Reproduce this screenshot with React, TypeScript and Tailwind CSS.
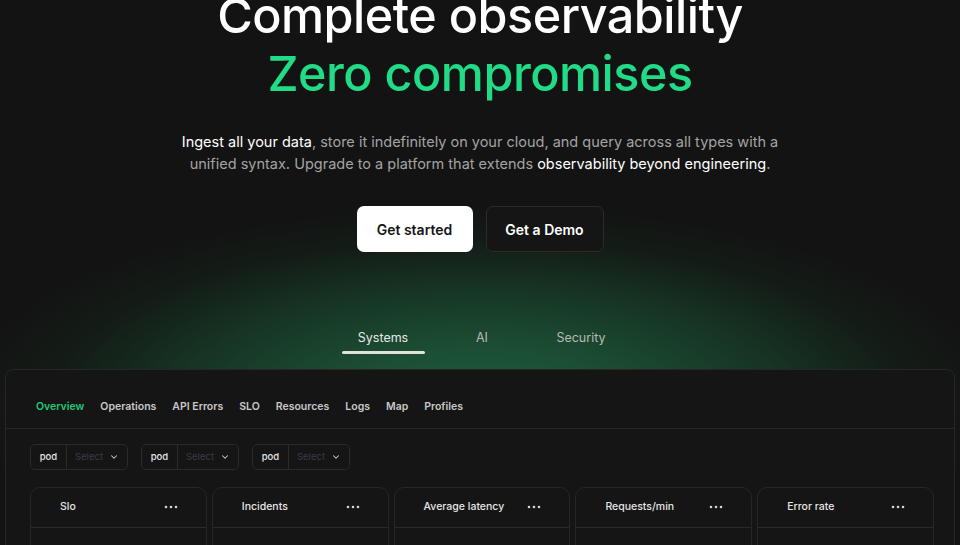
import { ChevronDown } from 'lucide-react';

const NAV = ['Overview', 'Operations', 'API Errors', 'SLO', 'Resources', 'Logs', 'Map', 'Profiles'];
const CARDS = ['Slo', 'Incidents', 'Average latency', 'Requests/min', 'Error rate'];

const Dots = () => (
  <svg width="14" height="4" viewBox="0 0 14 4" aria-hidden="true">
    <circle cx="2" cy="2" r="1.3" fill="#d4d4d4" />
    <circle cx="7" cy="2" r="1.3" fill="#d4d4d4" />
    <circle cx="12" cy="2" r="1.3" fill="#d4d4d4" />
  </svg>
);

const Filter = () => (
  <div className="flex h-[26px] items-stretch rounded-[5px] border border-[#2a2a2a] text-[9.5px]">
    <span className="flex w-[36px] items-center justify-center border-r border-[#2a2a2a] font-medium text-[#e5e5e5]">
      pod
    </span>
    <span className="flex w-[60px] items-center justify-center gap-[6px] text-[#3a3b46]">
      Select
      <ChevronDown size={10} strokeWidth={2.5} className="text-[#cfcfcf]" />
    </span>
  </div>
);

export default function App() {
  return (
    <div
      className="relative h-[545px] w-[960px] overflow-hidden bg-[#131313] text-white"
      style={{ fontFamily: 'Inter, "Noto Sans", sans-serif' }}
    >
      {/* green glow behind the tabs */}
      <div className="pointer-events-none absolute left-1/2 top-[190px] h-[420px] w-[1100px] -translate-x-1/2 bg-[radial-gradient(ellipse_47%_46%_at_50%_50%,#1f5d3d_0%,#1b4c32_30%,#173424_58%,#141c17_82%,transparent_100%)]" />

      <div className="relative flex flex-col items-center">
        <h1 className="-mt-[13px] text-center text-[48.5px] font-medium leading-[58px] tracking-[-0.5px]">
          <span className="block">Complete observability</span>
          <span className="block text-[#21dc86]">Zero compromises</span>
        </h1>

        <p className="mt-[28px] w-[600px] text-center text-[14.5px] leading-[22px] text-[#a3a3a3]">
          <span className="text-white">Ingest all your data</span>, store it indefinitely on your cloud, and query
          across all types with a unified syntax. Upgrade to a platform that extends{' '}
          <span className="text-white">observability beyond engineering</span>.
        </p>

        <div className="mt-[31px] flex gap-[13px]">
          <button className="h-[46px] w-[116px] rounded-[7px] bg-white text-[14px] font-semibold text-[#151515]">
            Get started
          </button>
          <button className="h-[46px] w-[118px] rounded-[7px] border border-[#2b2b2b] bg-[#141514] text-[14px] font-semibold text-white">
            Get a Demo
          </button>
        </div>

        <div className="ml-[4px] mt-[77px] flex gap-[16px] text-[12.5px]">
          <div className="flex w-[83px] flex-col items-center">
            <span className="text-[#e8e8e8]">Systems</span>
            <span className="mt-[3px] h-[3px] w-full rounded-full bg-[#e0e0e0]" />
          </div>
          <span className="w-[83px] text-center text-[#b8b8b8]">AI</span>
          <span className="w-[83px] text-center text-[#b8b8b8]">Security</span>
        </div>
      </div>

      <div className="relative mx-[5px] mt-[15px] h-[200px] rounded-t-[8px] border border-[#262626] bg-[#151515]">
        <nav className="flex h-[59px] items-end gap-[16px] border-b border-[#2a2626] px-[30px] pb-[13px] text-[10.5px] font-semibold text-[#c8c8c8]">
          {NAV.map((n, i) => (
            <span key={n} className={i === 0 ? 'text-[#22c87a]' : ''}>
              {n}
            </span>
          ))}
        </nav>

        <div className="flex gap-[13px] px-[24px] pt-[15px]">
          <Filter />
          <Filter />
          <Filter />
        </div>

        <div className="mt-[17px] grid grid-cols-5 gap-[5px] pl-[24px] pr-[20px]">
          {CARDS.map((c) => (
            <div key={c} className="h-[80px] rounded-t-[10px] border border-[#262626]">
              <div className="flex h-[40px] items-center justify-between border-b border-[#2a2a2a] pl-[29px] pr-[28px]">
                <span className="text-[10.5px] font-medium text-[#e5e5e5]">{c}</span>
                <Dots />
              </div>
            </div>
          ))}
        </div>
      </div>
    </div>
  );
}
